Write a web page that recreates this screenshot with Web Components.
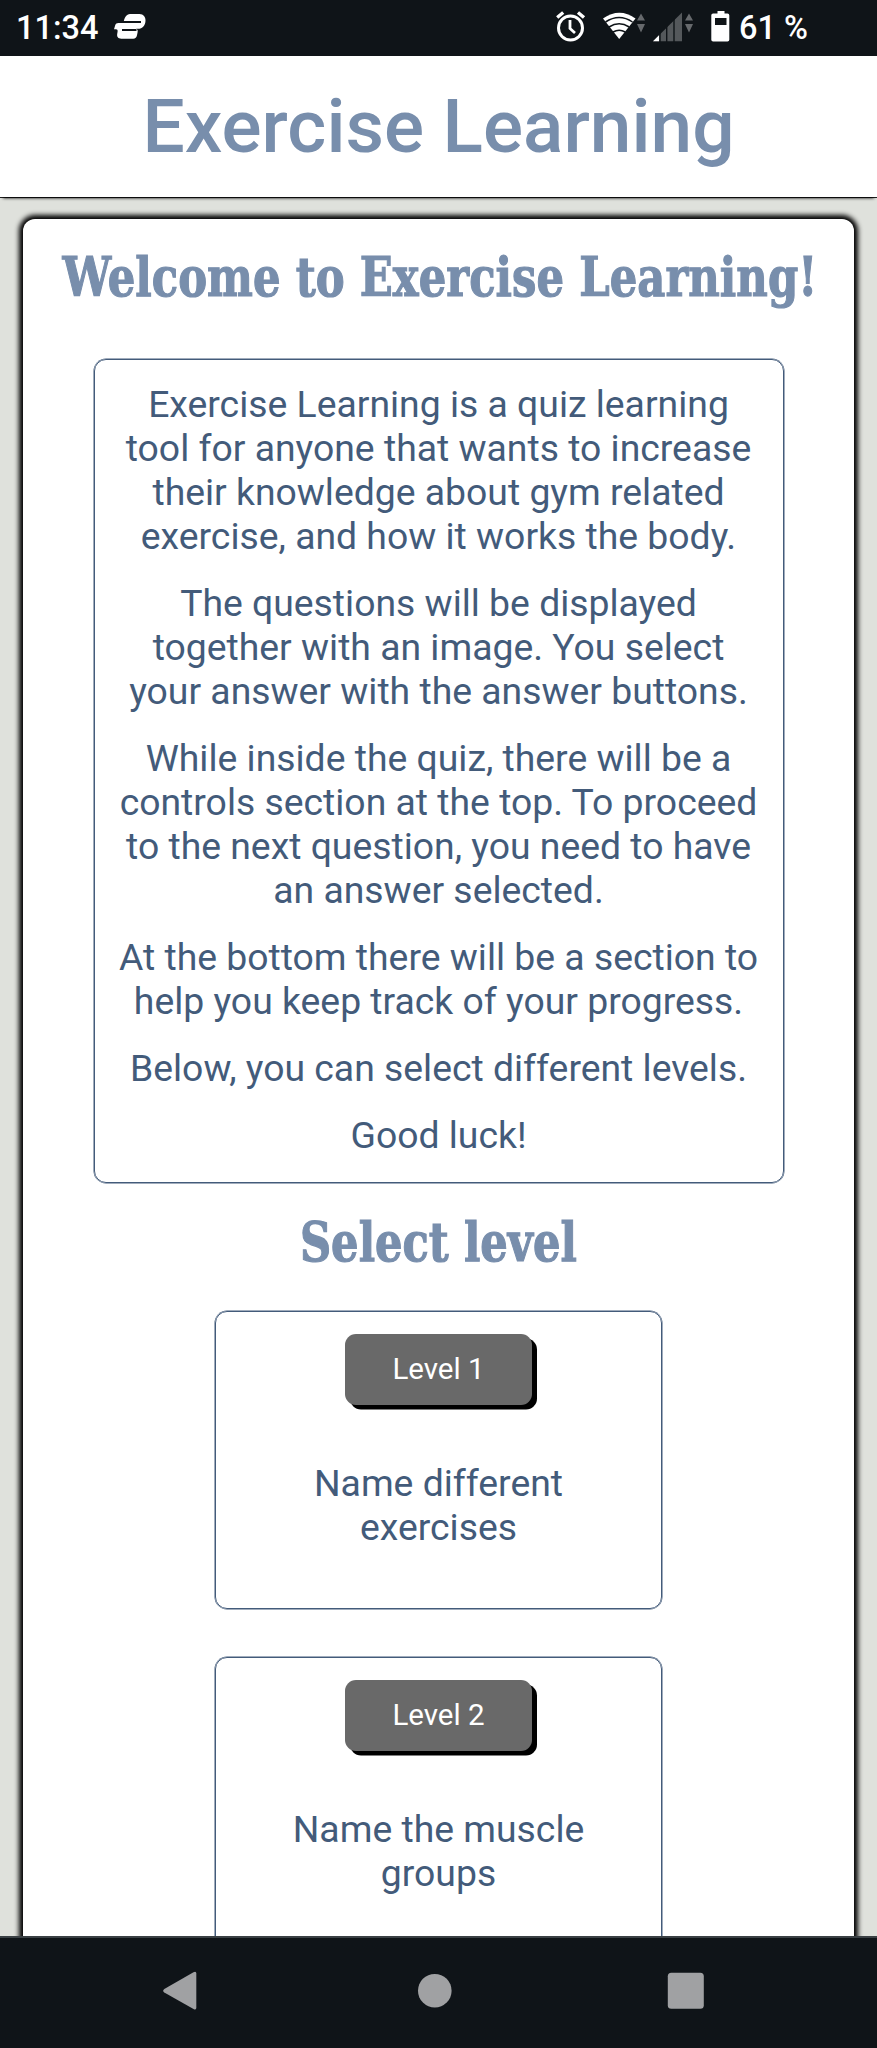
<!DOCTYPE html>
<html lang="en">
<head>
<meta charset="utf-8">
<title>Exercise Learning</title>
<style>
html,body{margin:0;height:100%}
body{background:#dfe1dc;font-family:Roboto,"Liberation Sans",sans-serif;color:#435b7a;overflow:hidden}
</style>
</head>
<body>
<app-screen>
  <status-bar slot="top" time="11:34" battery="61 %"></status-bar>
  <app-header slot="top">Exercise Learning</app-header>
  <content-card>
    <section-title style="--sx:.811;--dx:1.5px;--h:61px;--top:28px">Welcome to Exercise Learning!</section-title>
    <info-box>
      <p>Exercise Learning is a quiz learning<br>tool for anyone that wants to increase<br>their knowledge about gym related<br>exercise, and how it works the body.</p>
      <p>The questions will be displayed<br>together with an image. You select<br>your answer with the answer buttons.</p>
      <p>While inside the quiz, there will be a<br>controls section at the top. To proceed<br>to the next question, you need to have<br>an answer selected.</p>
      <p>At the bottom there will be a section to<br>help you keep track of your progress.</p>
      <p>Below, you can select different levels.</p>
      <p>Good luck!</p>
    </info-box>
    <section-title style="--sx:.808;--dx:0px;--h:99px;--top:29px">Select level</section-title>
    <level-card label="Level 1">Name different<br>exercises</level-card>
    <level-card label="Level 2">Name the muscle<br>groups</level-card>
  </content-card>
  <nav-bar slot="bottom"></nav-bar>
</app-screen>
<script>
const define = (name, html, init) => customElements.define(name, class extends HTMLElement {
  constructor() {
    super();
    this.attachShadow({ mode: 'open' }).innerHTML = html;
  }
  connectedCallback() { if (init) init(this, this.shadowRoot); }
});

define('app-screen', `<style>
:host{display:flex;flex-direction:column;height:2048px;width:877px;overflow:hidden}
main{flex:1;min-height:0;overflow:hidden;padding:22px 23px 0 23px}
</style><slot name="top"></slot><main><slot></slot></main><slot name="bottom"></slot>`);

define('status-bar', `<style>
:host{display:block;height:56px;background:#0f1418;color:#fff;flex:none;position:relative;z-index:2}
.row{display:flex;align-items:center;height:56px;font-size:32.5px;font-weight:500;line-height:56px}
.time{margin-left:16px;width:98px;white-space:nowrap}
svg{display:block;flex:none}
.pct{white-space:nowrap}
</style><div class="row"><span class="time"></span>
<svg width="426" height="56" viewBox="114 0 426 56"><path d="M130 14h9.500c4 0 6 3 6 6.500 0 4.800-3 8.300-7.500 8.300h-2c1.500.5 2 1.700 1.600 3.500l-.6 3c-.5 2.200-1.600 3.400-3.800 3.400h-12c-3 0-4.500-2-4-4.700l.4-2.500c.2-1.500-.4-2.200-1.600-2.200h-2l1.200-4c.5-1.500 1.500-2.300 3.200-2.300h5.100c.8-5.500 3-9 6.500-9Z" fill="#fff"/><path d="M123 21.900h18M122 29.900h14.500" stroke="#0f1418" stroke-width="2"/></svg>
<svg width="199" height="56" viewBox="540 0 199 56">
<g fill="none" stroke="#fff"><circle cx="570.500" cy="28" r="12" stroke-width="3"/><path d="M570 20v8.500l5 4.500" stroke-width="2.800"/><path d="M557.200 17.500l6-5M584 17.500l-6-5" stroke-width="3.400"/></g>
<path d="M603 18.500q16.500-11.500 32.500 0L619.200 39Z" fill="#fff"/>
<g fill="none" stroke="#0f1418" stroke-width="1.500"><path d="M605.500 22q13.700-9 27 0M609 27q10.200-6.500 20.200 0M613 32q6.200-3.500 12.200 0"/></g>
<g fill="#66696c"><path d="M641 13.500l4 7h-8ZM637 24h8l-4 8.500ZM689 13.500l4 7h-8ZM685 24h8l-4 8.500Z"/></g>
<path d="M653 41.300L682 12.500v28.800Z" fill="#54585b"/><path d="M653 41.300l6-6v6Z" fill="#fff"/>
<path d="M660 30v12M666.700 24v18M674 18v24" stroke="#0f1418" stroke-width="1.400"/>
<path d="M717.500 11h7v2.500h3a1.800 1.800 0 0 1 1.800 1.800v24.500a1.800 1.800 0 0 1-1.800 1.800h-14.400a1.800 1.800 0 0 1-1.800-1.800V15.300a1.800 1.800 0 0 1 1.800-1.800h4.400Z" fill="#fff"/><path d="M715 18h11.500v7H715Z" fill="#0f1418"/>
</svg><span class="pct"></span></div>`, (el, r) => {
  r.querySelector('.time').textContent = el.getAttribute('time');
  r.querySelector('.pct').textContent = el.getAttribute('battery');
});

define('app-header', `<style>
:host{display:block;flex:none;position:relative;z-index:1;height:141px;background:#fff;box-shadow:0 4px 3px -3px #000,0 1px 0 0 #222}
h1{margin:0;text-align:center;font-size:74.800px;font-weight:500;line-height:140px;color:#788eac;white-space:nowrap;padding-top:1px}
</style><h1><slot></slot></h1>`);

define('content-card', `<style>
:host{display:flex;flex-direction:column;align-items:center;height:1800px;background:#fff;border-radius:12px;box-shadow:0 0 5px 4px #000}
</style><slot></slot>`);

define('section-title', `<style>
:host{display:flex;justify-content:center;flex:none;height:var(--h);margin-top:var(--top);width:100%}
h2{margin:0;font:bold 53.500px/61px "DejaVu Serif",serif;color:#788eac;white-space:nowrap;transform:translateX(var(--dx)) scaleX(var(--sx));-webkit-text-stroke:1.200px #788eac}
</style><h2><slot></slot></h2>`);

define('info-box', `<style>
:host{display:block;flex:none;box-sizing:border-box;width:690px;height:824px;margin-top:51px;padding-top:23px;border:1px solid #435b7a;box-shadow:0 0 0 .5px #435b7a;border-radius:12px;text-align:center;font-size:37.330px;line-height:43.900px;white-space:nowrap}
::slotted(p){margin:0 0 23.300px!important}
</style><slot></slot>`);

define('level-card', `<style>
:host{display:flex;flex-direction:column;align-items:center;flex:none;box-sizing:border-box;width:447px;height:298px;margin-bottom:48px;padding-top:22px;border:1px solid #435b7a;box-shadow:0 0 0 .5px #435b7a;border-radius:12px}
button{font:400 29.500px/71px Roboto,sans-serif;color:#fff;background:#696969;border:0;border-radius:11px;width:187px;height:71px;padding:0;box-shadow:5px 4.500px 0 #000}
div{margin-top:57px;text-align:center;font-size:37.330px;line-height:43.900px;white-space:nowrap}
</style><button></button><div><slot></slot></div>`, (el, r) => {
  r.querySelector('button').textContent = el.getAttribute('label');
});

define('nav-bar', `<style>
:host{display:block;flex:none;height:112px;background:#0f1418;border-top:2px solid #3a4044;box-sizing:border-box;position:relative;z-index:2}
svg{display:block}
</style><svg width="877" height="110" viewBox="0 1938 877 110" fill="#a0a1a3"><path d="M164.300 1989L193.500 1972.200Q196.300 1970.800 196.300 1973.500V2007.800Q196.300 2010.500 193.500 2009L164.300 1992.500Q162 1990.800 164.300 1989Z"/><circle cx="434.800" cy="1990.700" r="16.800"/><rect x="667.800" y="1972.700" width="36" height="36" rx="3.500"/></svg>`);
</script>
</body>
</html>
